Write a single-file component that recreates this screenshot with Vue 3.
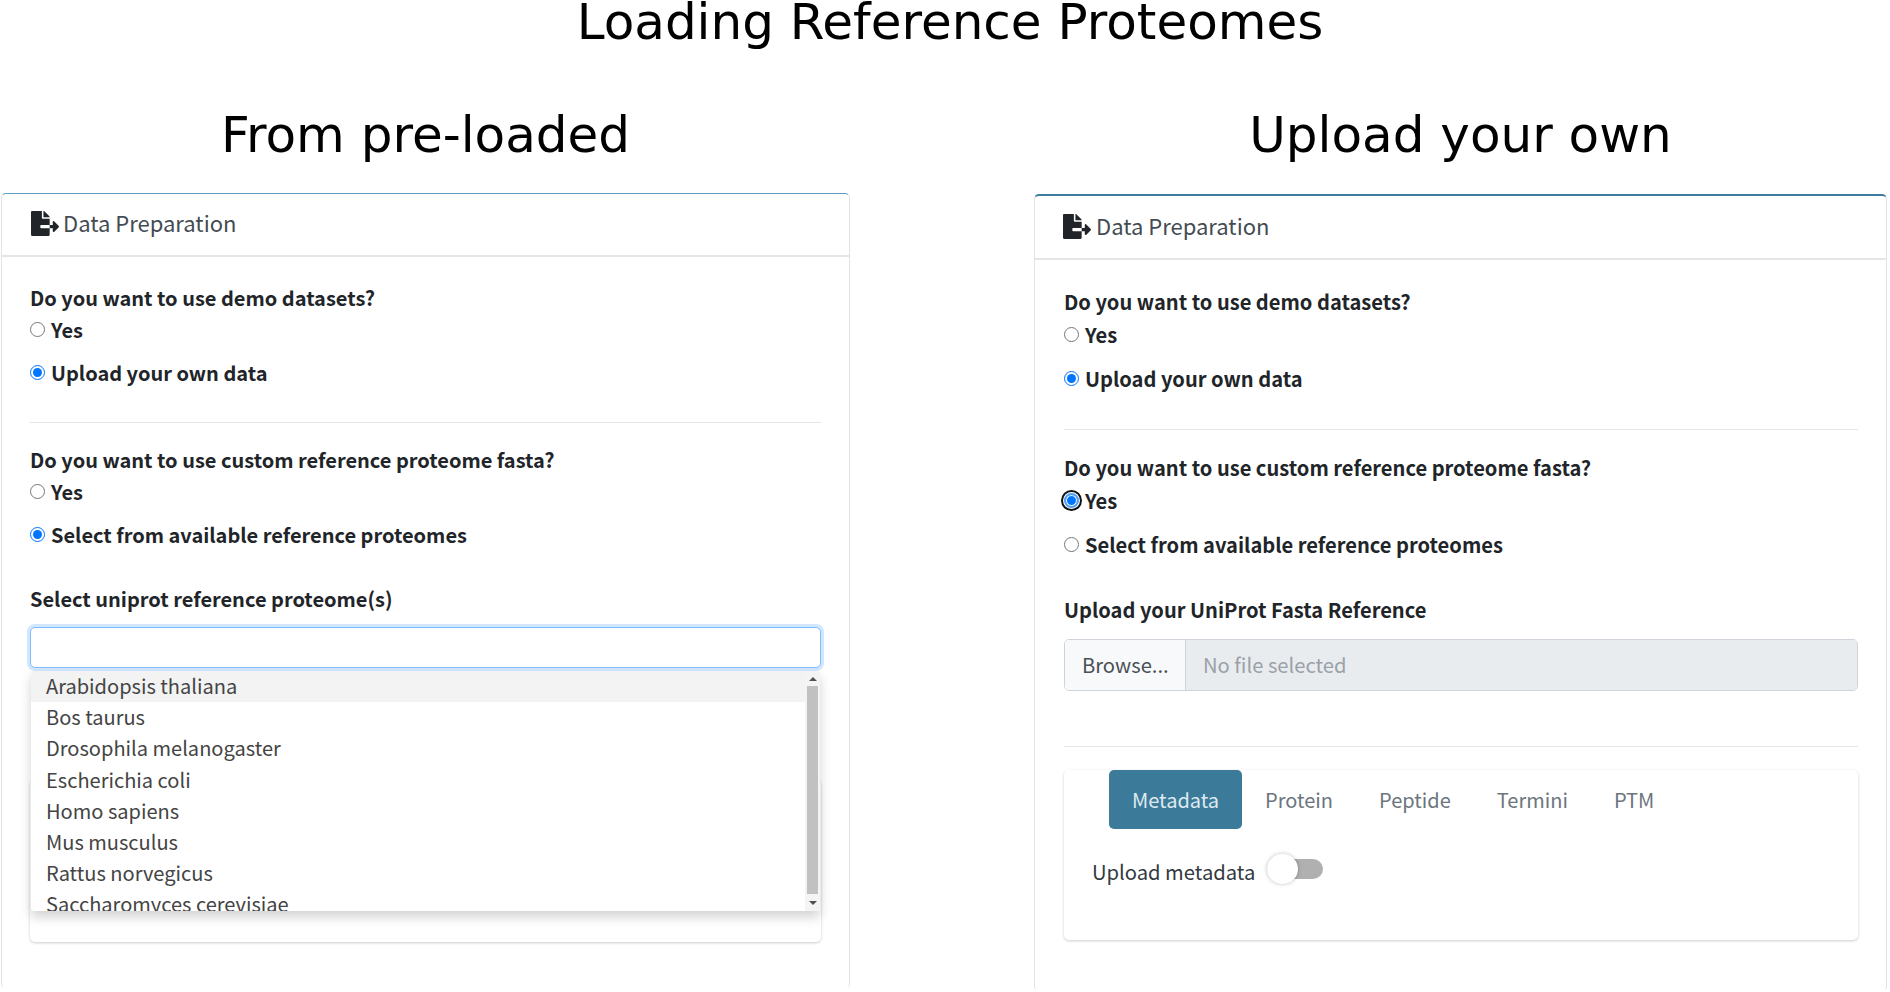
<template>
  <div class="page">
    <h1 class="title">Loading Reference Proteomes</h1>
    <div class="columns">
      <section class="col left">
        <h2 class="sub">From pre-loaded</h2>
        <div class="panel">
          <header class="panel-head">
            <svg class="icon" viewBox="0 0 576 512"><path :d="fileExport" /></svg>
            <span>Data Preparation</span>
          </header>
          <div class="panel-body">
            <div class="label">Do you want to use demo datasets?</div>
            <label class="radio r1"><input type="radio" name="l1" /><span>Yes</span></label>
            <label class="radio r2"><input type="radio" name="l1" checked /><span>Upload your own data</span></label>
            <hr class="rule" />
            <div class="label">Do you want to use custom reference proteome fasta?</div>
            <label class="radio r3"><input type="radio" name="l2" /><span>Yes</span></label>
            <label class="radio r2"><input type="radio" name="l2" checked /><span>Select from available reference proteomes</span></label>
            <div class="label l3">Select uniprot reference proteome(s)</div>
            <div class="select-wrap">
              <div class="select-input"></div>
              <div class="dropdown">
                <div class="options">
                  <div v-for="(name, i) in species" :key="name" class="option" :class="{ active: i === 0 }">{{ name }}</div>
                </div>
                <div class="scrollbar">
                  <span class="arrow up"></span>
                  <span class="thumb"></span>
                  <span class="arrow down"></span>
                </div>
              </div>
            </div>
            <div class="card under"></div>
          </div>
        </div>
      </section>

      <section class="col right">
        <h2 class="sub">Upload your own</h2>
        <div class="panel">
          <header class="panel-head">
            <svg class="icon" viewBox="0 0 576 512"><path :d="fileExport" /></svg>
            <span>Data Preparation</span>
          </header>
          <div class="panel-body">
            <div class="label">Do you want to use demo datasets?</div>
            <label class="radio r1"><input type="radio" name="r1" /><span>Yes</span></label>
            <label class="radio r2"><input type="radio" name="r1" checked /><span>Upload your own data</span></label>
            <hr class="rule" />
            <div class="label">Do you want to use custom reference proteome fasta?</div>
            <label class="radio r3"><input class="focused" type="radio" name="r2" checked /><span>Yes</span></label>
            <label class="radio r2"><input type="radio" name="r2" /><span>Select from available reference proteomes</span></label>
            <div class="label l3">Upload your UniProt Fasta Reference</div>
            <div class="file">
              <span class="browse">Browse...</span>
              <span class="file-name">No file selected</span>
            </div>
            <hr class="rule second" />
            <div class="card tabs-card">
              <nav class="tabs">
                <span v-for="(tab, i) in tabs" :key="tab" class="tab" :class="{ active: i === 0 }">{{ tab }}</span>
              </nav>
              <div class="switch-row">
                <span>Upload metadata</span>
                <span class="switch"><span class="knob"></span></span>
              </div>
            </div>
          </div>
        </div>
      </section>
    </div>
  </div>
</template>

<script setup>
const fileExport =
  'M384 121.9c0-6.3-2.5-12.4-7-16.9L279.1 7c-4.5-4.5-10.6-7-17-7H256v128h128zM571 308l-95.7-96.4c-10.1-10.1-27.4-3-27.4 11.3V288h-64v64h64v65.2c0 14.3 17.3 21.4 27.4 11.3L571 332c6.6-6.6 6.6-17.4 0-24zm-379 28v-32c0-8.8 7.2-16 16-16h176V160H248c-13.2 0-24-10.8-24-24V0H24C10.7 0 0 10.7 0 24v464c0 13.3 10.7 24 24 24h336c13.3 0 24-10.7 24-24V352H208c-8.8 0-16-7.2-16-16z'

const species = [
  'Arabidopsis thaliana',
  'Bos taurus',
  'Drosophila melanogaster',
  'Escherichia coli',
  'Homo sapiens',
  'Mus musculus',
  'Rattus norvegicus',
  'Saccharomyces cerevisiae',
]

const tabs = ['Metadata', 'Protein', 'Peptide', 'Termini', 'PTM']
</script>

<style>
html,
body {
  margin: 0;
  background: #fff;
}
</style>

<style scoped>
.page {
  width: 1890px;
  height: 992px;
  overflow: hidden;
  background: #fff;
  font-family: "Noto Sans CJK SC", "Noto Sans", sans-serif;
  color: #212529;
}
.title {
  margin: 0;
  padding-left: 10px;
  height: 44px;
  line-height: 44px;
  font-family: "DejaVu Sans", sans-serif;
  font-size: 50px;
  font-weight: 400;
  text-align: center;
  color: #000;
}
.columns {
  display: grid;
  grid-template-columns: 849px 853px;
  column-gap: 184px;
  padding-left: 1px;
  margin-top: 61px;
}
.sub {
  margin: 0;
  height: 60px;
  line-height: 60px;
  font-family: "DejaVu Sans", sans-serif;
  font-size: 50px;
  font-weight: 400;
  text-align: center;
  color: #000;
}
.panel {
  box-sizing: border-box;
  height: 796px;
  border: 1px solid #e3e3e3;
  border-bottom-color: transparent;
  border-radius: 5px;
  background: #fff;
}
.left .panel {
  margin-top: 28px;
  border-top: 1px solid #5f9dc2;
}
.right .panel {
  margin-top: 29px;
  height: 797px;
  border-top: 2px solid #3c7c9e;
}
.panel-head {
  display: flex;
  align-items: center;
  gap: 4px;
  height: 61px;
  padding: 0 29px;
  border-bottom: 2px solid #e5e5e5;
  font-size: 22px;
  color: #444c53;
}
.panel-head span {
  margin-top: -5px;
}
.right .panel-head {
  height: 62px;
  padding-left: 28px;
  gap: 5px;
}
.icon {
  width: 28px;
  height: 25px;
  margin-top: -2px;
  fill: #212529;
}
.panel-body {
  padding: 26px 28px 0 28px;
}
.right .panel-body {
  padding: 27px 28px 0 29px;
}
.label {
  height: 30px;
  line-height: 30px;
  font-size: 20px;
  font-weight: 700;
}
.radio {
  display: flex;
  align-items: center;
  gap: 6px;
  height: 30px;
  font-size: 20px;
  font-weight: 700;
}
.right .label,
.right .radio {
  font-size: 20.1px;
}
.radio input {
  width: 15px;
  height: 15px;
  margin: 0;
}
.radio .focused {
  appearance: none;
  box-sizing: border-box;
  border: 2px solid #4b9dff;
  border-radius: 50%;
  background: #0075ff;
  background-clip: padding-box;
  box-shadow: inset 0 0 0 1px #fff, 0 0 0 1px #fff, 0 0 0 3px #111;
}
.r1 {
  margin-top: 1px;
}
.r2 {
  margin-top: 13px;
}
.r3 {
  margin-top: 1px;
}
.right .r1 {
  margin-top: 2px;
}
.right .r2 {
  margin-top: 14px;
}
.right .r3 {
  margin-top: 2px;
}
.rule {
  margin: 35px 0 22px;
  border: 0;
  border-top: 1px solid #e5e5e5;
}
.right .rule {
  margin: 36px 0 23px;
}
.l3 {
  margin-top: 35px;
}
.right .l3 {
  margin-top: 36px;
}
.select-wrap {
  position: relative;
  margin-top: 13px;
}
.select-input {
  box-sizing: border-box;
  height: 41px;
  border: 1px solid #80bdff;
  border-radius: 5px;
  background: #fff;
  box-shadow: 0 0 0 3px rgba(0, 123, 255, 0.18);
}
.dropdown {
  position: absolute;
  left: 1px;
  right: 1px;
  top: 44px;
  z-index: 2;
  display: flex;
  height: 240px;
  overflow: hidden;
  background: #fff;
  border-radius: 3px;
  box-shadow: 0 6px 12px rgba(0, 0, 0, 0.18);
}
.options {
  flex: 1;
  overflow: hidden;
}
.option {
  height: 31.2px;
  line-height: 29.5px;
  padding-left: 15px;
  font-size: 20.05px;
  color: #444;
}
.option.active {
  background: #f3f3f3;
}
.scrollbar {
  display: flex;
  flex-direction: column;
  align-items: center;
  justify-content: space-between;
  width: 15px;
  background: #f4f4f4;
}
.thumb {
  flex: 1;
  width: 11px;
  margin: 5px 0 7px;
  background: #c1c1c1;
}
.arrow {
  width: 0;
  height: 0;
  margin: 6px 0 0;
  border-left: 4px solid transparent;
  border-right: 4px solid transparent;
}
.arrow.up {
  border-bottom: 4px solid #505050;
}
.arrow.down {
  margin: 0 0 6px;
  border-top: 4px solid #505050;
}
.card {
  box-sizing: border-box;
  border-radius: 5px;
  background: #fff;
  box-shadow: 0 1px 3px rgba(0, 0, 0, 0.2);
}
.under {
  height: 162px;
  margin-top: 112px;
}
.file {
  display: flex;
  box-sizing: border-box;
  height: 52px;
  margin-top: 14px;
  border: 1px solid #ced4da;
  border-radius: 5px;
  overflow: hidden;
  font-size: 20.2px;
  line-height: 50px;
}
.browse {
  width: 121px;
  box-sizing: border-box;
  padding-left: 17px;
  border-right: 1px solid #ced4da;
  background: #f8f9fa;
  color: #495057;
}
.file-name {
  flex: 1;
  padding-left: 17px;
  background: #e9ecef;
  color: #9aa1a8;
}
.right .second {
  margin: 55px 0 23px;
}
.tabs-card {
  height: 170px;
  padding-left: 45px;
}
.tabs {
  display: flex;
}
.tab {
  height: 59px;
  line-height: 59px;
  padding: 0 23px;
  font-size: 20px;
  color: #6c757d;
  border-radius: 5px;
}
.tab.active {
  background: #3c7a9a;
  color: #dfeaf0;
}
.switch-row {
  display: flex;
  align-items: center;
  gap: 12px;
  height: 40px;
  margin: 22px 0 0 -17px;
  font-size: 20.2px;
  color: #33393f;
}
.switch {
  position: relative;
  width: 56px;
  height: 20px;
  margin-top: -4px;
  border-radius: 10px;
  background: #b0b0b0;
}
.knob {
  position: absolute;
  left: 0;
  top: -5px;
  width: 31px;
  height: 30px;
  border-radius: 50%;
  background: #fff;
  box-shadow: 0 0 4px rgba(0, 0, 0, 0.25);
}
</style>
